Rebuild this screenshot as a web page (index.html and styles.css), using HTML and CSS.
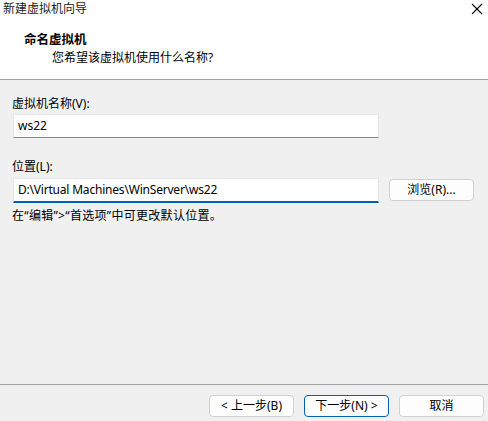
FILE: index.html
```html
<!DOCTYPE html>
<html lang="zh-CN">
<head>
<meta charset="utf-8">
<link rel="stylesheet" href="styles.css">
</head>
<body>
<div class="win">
  <div class="header">
    <div class="titlebar">
      <span class="title">新建虚拟机向导</span>
      <svg class="close" width="12" height="12" viewBox="0 0 12 12"><path d="M1 1L11 11M11 1L1 11" stroke="#000" stroke-width="1.1" fill="none"/></svg>
    </div>
    <div class="heading">命名虚拟机</div>
    <div class="sub">您希望该虚拟机使用什么名称?</div>
  </div>
  <div class="body">
    <div class="label first">虚拟机名称(V):</div>
    <div class="input">ws22</div>
    <div class="label second">位置(L):</div>
    <div class="row">
      <div class="input focus">D:\Virtual Machines\WinServer\ws22</div>
      <div class="btn browse">浏览(R)...</div>
    </div>
    <div class="hint">在“编辑”&gt;“首选项”中可更改默认位置。</div>
  </div>
  <div class="footer">
    <div class="btn">&lt; 上一步(B)</div>
    <div class="btn primary">下一步(N) &gt;</div>
    <div class="btn cancel">取消</div>
  </div>
</div>
</body>
</html>
```
FILE: styles.css
```css
* { box-sizing: border-box; }
html, body { margin: 0; padding: 0; }
body {
  width: 488px;
  height: 421px;
  background: #f0f0f0;
  font-family: "Segoe UI", "Noto Sans", "Noto Sans CJK SC", sans-serif;
  font-size: 12px;
  color: #000;
  overflow: hidden;
}
.win { display: flex; flex-direction: column; height: 421px; }
.header {
  height: 80px;
  background: #fff;
  border-bottom: 1px solid #a0a0a0;
  display: flex;
  flex-direction: column;
}
.titlebar {
  height: 26px;
  display: flex;
  justify-content: space-between;
  align-items: flex-start;
  padding: 0 5px 0 3px;
  line-height: 17px;
}
.title { color: #1a1a1a; }
.close { margin-top: 3px; }
.heading {
  font-weight: bold;
  font-size: 12.5px;
  padding-left: 24px;
  line-height: 17px;
  margin-top: 5px;
}
.sub {
  padding-left: 52px;
  line-height: 17px;
  margin-top: 1px;
}
.body {
  flex: 1;
  padding: 0 14px 0 13px;
  display: flex;
  flex-direction: column;
}
.label { line-height: 16px; margin-left: -1px; }
.label.first { margin-top: 16px; }
.label.second { margin-top: 21px; }
.input {
  width: 366px;
  height: 24px;
  background: #fff;
  border: 1px solid #e6e6e6;
  border-bottom: 1px solid #868686;
  border-radius: 2px 2px 0 0;
  padding: 0 4px;
  line-height: 22px;
  margin-top: 2px;
}
.input.focus {
  height: 25px;
  border-bottom: 2px solid #005fb8;
  letter-spacing: -0.2px;
}
.row { display: flex; align-items: flex-start; gap: 10px; margin-top: 3px; }
.row .input { margin-top: 0; }
.btn {
  width: 85px;
  height: 22px;
  background: #fdfdfd;
  border: 1px solid #d0d0d0;
  border-radius: 4px;
  text-align: center;
  line-height: 20px;
}
.browse { margin-top: 1px; }
.hint { margin-top: 5px; line-height: 16px; margin-left: -1px; letter-spacing: 0.3px; }
.footer {
  height: 37px;
  border-top: 1px solid #a0a0a0;
  display: flex;
  justify-content: flex-end;
  gap: 10px;
  padding: 10px 4px 0 0;
}
.btn.primary { border-color: #005fb8; }
```
